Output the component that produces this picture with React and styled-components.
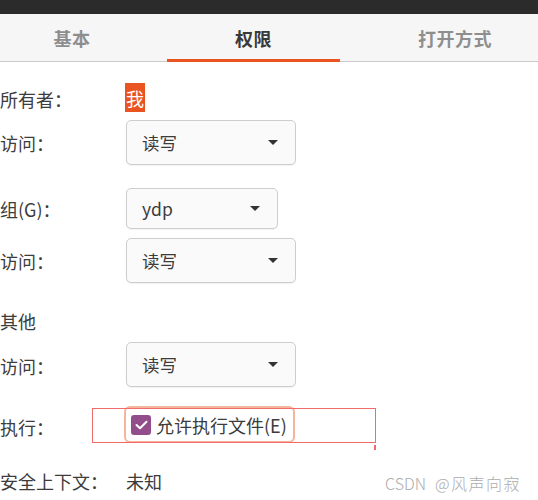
import React from "react";
import styled, { createGlobalStyle } from "styled-components";

const Global = createGlobalStyle`
  html, body { margin: 0; padding: 0; background: #ffffff; }
  body { font-family: "Noto Sans CJK SC", "Noto Sans", sans-serif; color: #3c3c3c; }
  * { box-sizing: border-box; }
`;

const Page = styled.div`
  position: relative;
  width: 538px;
  height: 500px;
  overflow: hidden;
  background: #ffffff;
`;

const TitleBar = styled.div`
  height: 14px;
  background: #2c2b2b;
`;

const TabBar = styled.div`
  display: flex;
  height: 48px;
  background: #f6f6f6;
  border-bottom: 1px solid #cbcbcb;
`;

const Tab = styled.div`
  position: relative;
  flex: 0 0 ${(p) => p.$w}px;
  display: flex;
  align-items: center;
  justify-content: center;
  padding: 0 ${(p) => p.$pr || 0}px 0 ${(p) => p.$pl || 0}px;
  font-size: 18px;
  font-weight: 700;
  color: ${(p) => (p.$active ? "#3a3a3a" : "#8e8e8e")};
  letter-spacing: 0.5px;
  &::after {
    content: "";
    display: ${(p) => (p.$active ? "block" : "none")};
    position: absolute;
    left: 0;
    right: 0;
    bottom: -1px;
    height: 3px;
    background: #e95420;
  }
`;

const Form = styled.div`
  display: flex;
  flex-direction: column;
  padding-top: 21px;
`;

const Row = styled.div`
  display: grid;
  grid-template-columns: 126px auto;
  align-items: center;
  height: ${(p) => p.$h}px;
  margin-top: ${(p) => p.$mt || 0}px;
`;

const Label = styled.div`
  font-size: 18px;
  line-height: 20px;
  color: #3c3c3c;
  white-space: nowrap;
  margin-top: ${(p) => p.$dy || 0}px;
`;

const Section = styled(Label)`
  grid-column: 1 / span 2;
`;

const Owner = styled.span`
  justify-self: start;
  display: inline-flex;
  align-items: center;
  justify-content: center;
  width: 20px;
  height: 29px;
  margin-left: -1px;
  background: #e95420;
  color: #ffffff;
  font-size: 18px;
`;

const Combo = styled.div`
  display: flex;
  align-items: center;
  justify-content: space-between;
  width: ${(p) => p.$w}px;
  height: ${(p) => p.$h}px;
  padding: 0 17px 0 15px;
  border: 1px solid #cdcdcd;
  border-radius: 5px;
  background: #fafafa;
  box-shadow: 0 1px 1px rgba(0, 0, 0, 0.05);
  font-size: 17.5px;
  color: #3c3c3c;
`;

const Arrow = styled.span`
  width: 0;
  height: 0;
  border-left: 5px solid transparent;
  border-right: 5px solid transparent;
  border-top: 5px solid #333333;
`;

const CheckRing = styled.div`
  justify-self: start;
  display: flex;
  align-items: center;
  gap: 5px;
  margin-left: -2px;
  height: 37px;
  padding: 0 6px 0 5px;
  border: 2px solid #f5b59c;
  border-radius: 6px;
  font-size: 18px;
  color: #3c3c3c;
`;

const Box = styled.span`
  display: inline-flex;
  align-items: center;
  justify-content: center;
  width: 20px;
  height: 20px;
  border-radius: 3px;
  background: #924d8b;
`;

const Value = styled.div`
  font-size: 18px;
  color: #3c3c3c;
`;

const Annotation = styled.div`
  position: absolute;
  left: 92px;
  top: 408px;
  width: 284px;
  height: 35px;
  border: 1.5px solid #f36a6a;
  pointer-events: none;
`;

const Tick = styled.div`
  position: absolute;
  left: 374px;
  top: 445px;
  width: 1.5px;
  height: 5px;
  background: #f36a6a;
`;

const Watermark = styled.div`
  position: absolute;
  left: 385px;
  top: 473px;
  display: flex;
  gap: 9px;
  line-height: 20px;
  font-weight: 300;
  color: #acacac;
  white-space: nowrap;
`;

const MarkLatin = styled.span`
  font-size: 16px;
`;

const MarkCjk = styled.span`
  font-size: 16px;
  letter-spacing: 1.5px;
`;

function Dropdown({ w = 170, h = 45, children }) {
  return (
    <Combo $w={w} $h={h}>
      <span>{children}</span>
      <Arrow />
    </Combo>
  );
}

export default function App() {
  return (
    <Page>
      <Global />
      <TitleBar />
      <TabBar>
        <Tab $w={167} $pr={23}>基本</Tab>
        <Tab $w={173} $active>权限</Tab>
        <Tab $w={198} $pl={32}>打开方式</Tab>
      </TabBar>
      <Form>
        <Row $h={29}>
          <Label $dy={2}>所有者：</Label>
          <Owner>我</Owner>
        </Row>
        <Row $h={45} $mt={8}>
          <Label>访问：</Label>
          <Dropdown>读写</Dropdown>
        </Row>
        <Row $h={41} $mt={23}>
          <Label>组(G)：</Label>
          <Dropdown w={152} h={41}>ydp</Dropdown>
        </Row>
        <Row $h={45} $mt={9}>
          <Label>访问：</Label>
          <Dropdown>读写</Dropdown>
        </Row>
        <Row $h={20} $mt={28}>
          <Section>其他</Section>
        </Row>
        <Row $h={45} $mt={11}>
          <Label $dy={2}>访问：</Label>
          <Dropdown h={45}>读写</Dropdown>
        </Row>
        <Row $h={37} $mt={19}>
          <Label $dy={5}>执行：</Label>
          <CheckRing>
            <Box>
              <svg width="13" height="10" viewBox="0 0 13 10">
                <path d="M1.5 5 L5 8.3 L11.5 1.7" fill="none" stroke="#ffffff" strokeWidth="2" strokeLinecap="round" strokeLinejoin="round" />
              </svg>
            </Box>
            <span>允许执行文件(E)</span>
          </CheckRing>
        </Row>
        <Row $h={22} $mt={25}>
          <Label>安全上下文：</Label>
          <Value>未知</Value>
        </Row>
      </Form>
      <Annotation />
      <Tick />
      <Watermark>
        <MarkLatin>CSDN</MarkLatin>
        <MarkCjk>@风声向寂</MarkCjk>
      </Watermark>
    </Page>
  );
}
